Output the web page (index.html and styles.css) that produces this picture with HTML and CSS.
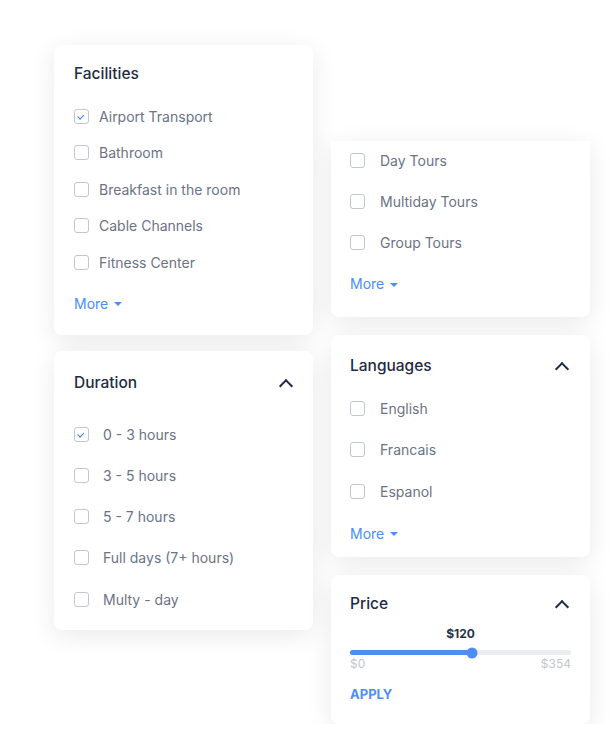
FILE: index.html
```html
<!DOCTYPE html>
<html lang="en">

<head>
    <meta charset="UTF-8">
    <meta name="viewport" content="width=device-width, initial-scale=1.0">
    <title>Filters</title>
    <link rel="stylesheet" href="styles.css">
</head>

<body>
    <div class="filters">
        <div class="column column-left">
            <div class="card card-facilities">
                <h3 class="card-title">Facilities</h3>
                <ul class="options">
                    <li><span class="box checked"></span>Airport Transport</li>
                    <li><span class="box"></span>Bathroom</li>
                    <li><span class="box"></span>Breakfast in the room</li>
                    <li><span class="box"></span>Cable Channels</li>
                    <li><span class="box"></span>Fitness Center</li>
                </ul>
                <a class="more">More <span class="caret"></span></a>
            </div>

            <div class="card card-duration">
                <div class="card-head">
                    <h3 class="card-title">Duration</h3>
                    <span class="chevron"></span>
                </div>
                <ul class="options wide">
                    <li><span class="box checked"></span>0 - 3 hours</li>
                    <li><span class="box"></span>3 - 5 hours</li>
                    <li><span class="box"></span>5 - 7 hours</li>
                    <li><span class="box"></span>Full days (7+ hours)</li>
                    <li><span class="box"></span>Multy - day</li>
                </ul>
            </div>
        </div>

        <div class="column column-right">
            <div class="card card-tours">
                <ul class="options wide">
                    <li><span class="box"></span>Day Tours</li>
                    <li><span class="box"></span>Multiday Tours</li>
                    <li><span class="box"></span>Group Tours</li>
                </ul>
                <a class="more">More <span class="caret"></span></a>
            </div>

            <div class="card card-languages">
                <div class="card-head">
                    <h3 class="card-title">Languages</h3>
                    <span class="chevron"></span>
                </div>
                <ul class="options wide">
                    <li><span class="box"></span>English</li>
                    <li><span class="box"></span>Francais</li>
                    <li><span class="box"></span>Espanol</li>
                </ul>
                <a class="more">More <span class="caret"></span></a>
            </div>

            <div class="card card-price">
                <div class="card-head">
                    <h3 class="card-title">Price</h3>
                    <span class="chevron"></span>
                </div>
                <div class="price-value">$120</div>
                <div class="slider">
                    <div class="slider-fill" style="width: 55%;"></div>
                    <span class="slider-thumb" style="left: 55%;"></span>
                </div>
                <div class="price-range">
                    <span>$0</span>
                    <span>$354</span>
                </div>
                <a class="apply">APPLY</a>
            </div>
        </div>
    </div>
</body>

</html>
```

FILE: styles.css
```css
body {
    margin: 0;
    background-color: #fff;
    font-family: 'Inter', 'Open Sans', sans-serif;
    color: #1f2a44;
}

.filters {
    display: flex;
    gap: 18px;
    padding-left: 54px;
}

.column {
    display: flex;
    flex-direction: column;
    width: 259px;
}

.column-left {
    padding-top: 45px;
    gap: 16px;
}

.column-right {
    padding-top: 141px;
    gap: 18px;
}

.card {
    background-color: #fff;
    border-radius: 8px;
    box-shadow: 0 6px 26px rgba(0, 0, 0, 0.085);
    padding: 0 20px;
}

.column-right .card {
    padding-left: 19px;
    padding-right: 19px;
}

.card-title {
    margin: 0;
    font-size: 15.5px;
    line-height: 20px;
    font-weight: 500;
    color: #1f2a44;
}

.card-head {
    display: flex;
    justify-content: space-between;
    align-items: center;
}

.chevron {
    width: 8px;
    height: 8px;
    border-left: 2px solid #1f2a44;
    border-top: 2px solid #1f2a44;
    transform: rotate(45deg);
    margin-right: 2px;
    margin-top: 6px;
}

.column-right .chevron {
    margin-right: 4px;
}

.options {
    list-style: none;
    margin: 0;
    padding: 0;
    display: flex;
    flex-direction: column;
    gap: 16.5px;
}

.options li {
    display: flex;
    align-items: center;
    gap: 10px;
    height: 20px;
    font-size: 14px;
    color: #6b7385;
}

.options.wide {
    gap: 21.3px;
}

.options.wide li {
    gap: 14px;
}

.column-right .options.wide li {
    gap: 15px;
}

.box {
    width: 15px;
    height: 15px;
    box-sizing: border-box;
    border: 1.5px solid #c2c6ce;
    border-radius: 3px;
    position: relative;
}

.box.checked::after {
    content: '';
    position: absolute;
    left: 4px;
    top: 3.5px;
    width: 2.5px;
    height: 4.5px;
    border-right: 1.5px solid #3b82f6;
    border-bottom: 1.5px solid #3b82f6;
    transform: rotate(45deg);
}

.more {
    display: flex;
    align-items: center;
    gap: 6px;
    height: 20px;
    font-size: 14px;
    color: #4c8df6;
    cursor: pointer;
}

.caret {
    width: 0;
    height: 0;
    border-left: 4px solid transparent;
    border-right: 4px solid transparent;
    border-top: 4px solid #4c8df6;
    margin-top: 2px;
}

/* card spacing */

.card-facilities {
    padding-top: 19px;
    padding-bottom: 22px;
}

.card-facilities .options {
    margin-top: 22px;
}

.card-facilities .more {
    margin-top: 21px;
}

.card-duration {
    padding-top: 22px;
    padding-bottom: 21px;
}

.card-duration .options {
    margin-top: 31px;
}

.card-tours {
    border-top-left-radius: 0;
    border-top-right-radius: 0;
    padding-top: 9px;
    padding-bottom: 23px;
}

.card-tours .more {
    margin-top: 21px;
}

.card-languages {
    padding-top: 21px;
    padding-bottom: 14px;
}

.card-languages .options {
    margin-top: 23px;
}

.card-languages .more {
    margin-top: 22px;
}

.card-price {
    padding-top: 19px;
    padding-bottom: 22px;
}

.price-value {
    text-align: center;
    font-size: 12px;
    font-weight: 700;
    color: #2a3348;
    margin-top: 12px;
    line-height: 16px;
}

.slider {
    position: relative;
    height: 5px;
    margin-top: 8px;
    border-radius: 3px;
    background-color: #eaecf0;
}

.slider-fill {
    height: 100%;
    border-radius: 3px;
    background-color: #4c8df6;
}

.slider-thumb {
    position: absolute;
    top: 50%;
    width: 11px;
    height: 11px;
    border-radius: 50%;
    background-color: #4c8df6;
    transform: translate(-50%, -50%);
}

.price-range {
    display: flex;
    justify-content: space-between;
    font-size: 12px;
    line-height: 14px;
    color: #c3c7ce;
    margin-top: 2px;
}

.apply {
    display: block;
    margin-top: 15px;
    font-size: 13px;
    font-weight: 700;
    line-height: 16px;
    color: #4c8df6;
    cursor: pointer;
}
```
